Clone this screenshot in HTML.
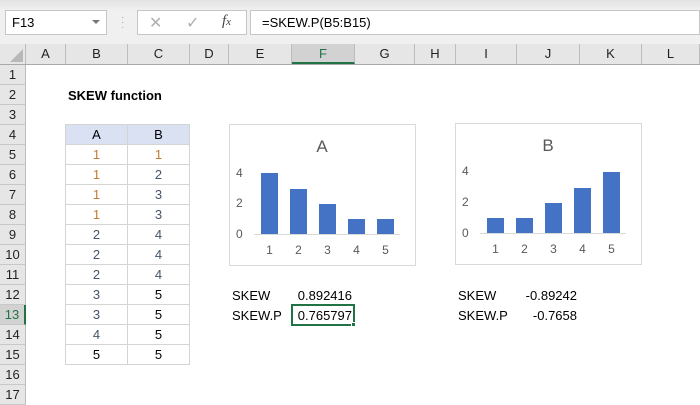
<!DOCTYPE html>
<html><head><meta charset="utf-8"><style>
*{margin:0;padding:0;box-sizing:border-box}
body{width:700px;height:400px;overflow:hidden;background:#fff;font-family:"Liberation Sans",sans-serif;font-size:13px;color:#000;position:relative}
.a{position:absolute}
.ch{position:absolute;top:44px;height:20px;text-align:center;line-height:20px;font-size:13px;color:#222;border-right:1px solid #bdbdbd}
.rh{position:absolute;left:0;width:26px;height:20px;text-align:center;line-height:20px;color:#222;background:#e6e6e6;border-bottom:1px solid #c8c8c8;border-right:1px solid #bdbdbd}
.c{position:absolute;height:20px;line-height:20px;text-align:center;border:1px solid #d4d4d4;margin:-1px 0 0 -1px}
.o{color:#c47a32}.b{color:#44546a}
</style></head><body>
<div class="a" style="left:0;top:0;width:700px;height:44px;background:linear-gradient(#e2e2e2,#f0f0f0 10px,#f0f0f0)"></div>
<div class="a" style="left:5px;top:10px;width:102px;height:25px;background:#fff;border:1px solid #c6c6c6;line-height:23px;padding-left:6px">F13</div>
<div class="a" style="left:92px;top:20px;width:0;height:0;border-left:4px solid transparent;border-right:4px solid transparent;border-top:4px solid #777"></div>
<div class="a" style="left:121px;top:15px;color:#aaa;font-size:10px;line-height:5px">·<br>·<br>·</div>
<div class="a" style="left:137px;top:10px;width:110px;height:25px;background:#fff;border:1px solid #c6c6c6"></div>
<div class="a" style="left:149px;top:13px;color:#b0b0b0;font-size:16px">✕</div>
<div class="a" style="left:186px;top:13px;color:#b0b0b0;font-size:16px">✓</div>
<div class="a" style="left:222px;top:13px;color:#444;font-size:15px;font-style:italic;font-family:'Liberation Serif',serif">f<span style="font-size:11px">x</span></div>
<div class="a" style="left:250px;top:10px;width:450px;height:25px;background:#fff;border:1px solid #c6c6c6;line-height:23px;padding-left:11px">=SKEW.P(B5:B15)</div>
<div class="a" style="left:0;top:44px;width:700px;height:21px;background:#e6e6e6;border-bottom:1px solid #a8a8a8"></div>
<div class="a" style="left:0;top:44px;width:26px;height:20px;border-right:1px solid #bdbdbd"></div>
<div class="a" style="left:10px;top:49px;width:0;height:0;border-left:13px solid transparent;border-bottom:13px solid #b8b8b8"></div>
<div class="ch" style="left:26px;width:40px">A</div>
<div class="ch" style="left:66px;width:62px">B</div>
<div class="ch" style="left:128px;width:62px">C</div>
<div class="ch" style="left:190px;width:39px">D</div>
<div class="ch" style="left:229px;width:63px">E</div>
<div class="ch" style="left:292px;width:63px;background:#d2d2d2;border-bottom:2px solid #217346;color:#217346">F</div>
<div class="ch" style="left:355px;width:60px">G</div>
<div class="ch" style="left:415px;width:41px">H</div>
<div class="ch" style="left:456px;width:61px">I</div>
<div class="ch" style="left:517px;width:63px">J</div>
<div class="ch" style="left:580px;width:62px">K</div>
<div class="ch" style="left:642px;width:58px">L</div>
<div class="rh" style="top:65px">1</div><div class="rh" style="top:85px">2</div><div class="rh" style="top:105px">3</div><div class="rh" style="top:125px">4</div><div class="rh" style="top:145px">5</div><div class="rh" style="top:165px">6</div><div class="rh" style="top:185px">7</div><div class="rh" style="top:205px">8</div><div class="rh" style="top:225px">9</div><div class="rh" style="top:245px">10</div><div class="rh" style="top:265px">11</div><div class="rh" style="top:285px">12</div><div class="rh" style="top:305px;background:#d2d2d2;color:#217346;border-right:2px solid #217346">13</div><div class="rh" style="top:325px">14</div><div class="rh" style="top:345px">15</div><div class="rh" style="top:365px">16</div><div class="rh" style="top:385px">17</div>
<div class="a" style="left:68px;top:86px;font-weight:bold;line-height:20px">SKEW function</div>
<div class="c" style="left:66px;top:125px;width:63px;height:21px;background:#d9e1f2">A</div>
<div class="c" style="left:128px;top:125px;width:63px;height:21px;background:#d9e1f2">B</div>
<div class="c o" style="left:66px;top:145px;width:63px;height:21px">1</div><div class="c o" style="left:128px;top:145px;width:63px;height:21px">1</div>
<div class="c o" style="left:66px;top:165px;width:63px;height:21px">1</div><div class="c b" style="left:128px;top:165px;width:63px;height:21px">2</div>
<div class="c o" style="left:66px;top:185px;width:63px;height:21px">1</div><div class="c b" style="left:128px;top:185px;width:63px;height:21px">3</div>
<div class="c o" style="left:66px;top:205px;width:63px;height:21px">1</div><div class="c b" style="left:128px;top:205px;width:63px;height:21px">3</div>
<div class="c b" style="left:66px;top:225px;width:63px;height:21px">2</div><div class="c b" style="left:128px;top:225px;width:63px;height:21px">4</div>
<div class="c b" style="left:66px;top:245px;width:63px;height:21px">2</div><div class="c b" style="left:128px;top:245px;width:63px;height:21px">4</div>
<div class="c b" style="left:66px;top:265px;width:63px;height:21px">2</div><div class="c b" style="left:128px;top:265px;width:63px;height:21px">4</div>
<div class="c b" style="left:66px;top:285px;width:63px;height:21px">3</div><div class="c" style="left:128px;top:285px;width:63px;height:21px">5</div>
<div class="c b" style="left:66px;top:305px;width:63px;height:21px">3</div><div class="c" style="left:128px;top:305px;width:63px;height:21px">5</div>
<div class="c b" style="left:66px;top:325px;width:63px;height:21px">4</div><div class="c" style="left:128px;top:325px;width:63px;height:21px">5</div>
<div class="c" style="left:66px;top:345px;width:63px;height:21px">5</div><div class="c" style="left:128px;top:345px;width:63px;height:21px">5</div>
<svg class="a" style="left:0;top:0" width="700" height="400" font-family="Liberation Sans, sans-serif">
<rect x="229.5" y="124.5" width="186" height="141" fill="#fff" stroke="#d9d9d9"/>
<text x="322" y="152" font-size="17" fill="#595959" text-anchor="middle">A</text>
<g font-size="12" fill="#595959">
<text x="236" y="177">4</text><text x="236" y="207">2</text><text x="236" y="238">0</text>
<text x="269.5" y="254" text-anchor="middle">1</text><text x="298.5" y="254" text-anchor="middle">2</text><text x="327.5" y="254" text-anchor="middle">3</text><text x="356.5" y="254" text-anchor="middle">4</text><text x="385.5" y="254" text-anchor="middle">5</text>
</g>
<line x1="254" y1="234.5" x2="400" y2="234.5" stroke="#d9d9d9"/>
<g fill="#4472c4"><rect x="261" y="173" width="17" height="61"/><rect x="290" y="189" width="17" height="45"/><rect x="319" y="204" width="17" height="30"/><rect x="348" y="219" width="17" height="15"/><rect x="377" y="219" width="17" height="15"/></g>
<rect x="455.5" y="123.5" width="186" height="141" fill="#fff" stroke="#d9d9d9"/>
<text x="548" y="151" font-size="17" fill="#595959" text-anchor="middle">B</text>
<g font-size="12" fill="#595959">
<text x="462" y="175">4</text><text x="462" y="206">2</text><text x="462" y="237">0</text>
<text x="495.5" y="253" text-anchor="middle">1</text><text x="524.5" y="253" text-anchor="middle">2</text><text x="553.5" y="253" text-anchor="middle">3</text><text x="582.5" y="253" text-anchor="middle">4</text><text x="611.5" y="253" text-anchor="middle">5</text>
</g>
<line x1="480" y1="233.5" x2="626" y2="233.5" stroke="#d9d9d9"/>
<g fill="#4472c4"><rect x="487" y="218" width="17" height="15"/><rect x="516" y="218" width="17" height="15"/><rect x="545" y="203" width="17" height="30"/><rect x="574" y="188" width="17" height="45"/><rect x="603" y="172" width="17" height="61"/></g>
</svg>
<div class="a" style="left:232px;top:286px;line-height:20px">SKEW</div>
<div class="a" style="left:292px;top:286px;width:60px;text-align:right;line-height:20px">0.892416</div>
<div class="a" style="left:232px;top:306px;line-height:20px">SKEW.P</div>
<div class="a" style="left:291px;top:304px;width:64px;height:22px;border:2px solid #217346"></div>
<div class="a" style="left:292px;top:306px;width:60px;text-align:right;line-height:20px">0.765797</div>
<div class="a" style="left:351px;top:322px;width:5px;height:5px;background:#217346;border:1px solid #fff"></div>
<div class="a" style="left:458px;top:286px;line-height:20px">SKEW</div>
<div class="a" style="left:517px;top:286px;width:60px;text-align:right;line-height:20px">-0.89242</div>
<div class="a" style="left:458px;top:306px;line-height:20px">SKEW.P</div>
<div class="a" style="left:517px;top:306px;width:60px;text-align:right;line-height:20px">-0.7658</div>
</body></html>
